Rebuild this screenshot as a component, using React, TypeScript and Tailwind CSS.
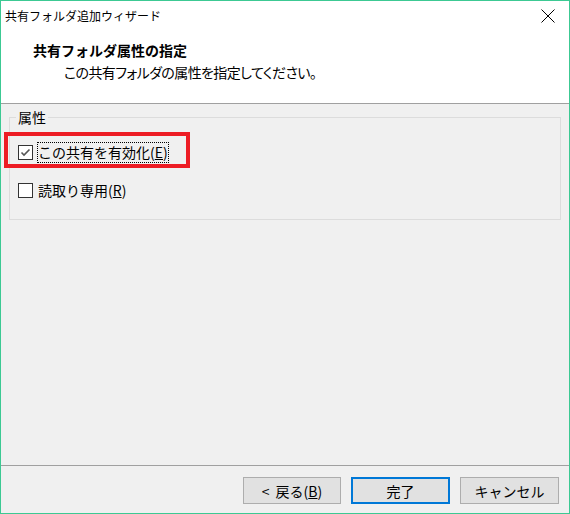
import React from "react";

function CheckBox({ checked }: { checked: boolean }) {
  return (
    <div className="w-[15px] h-[15px] border border-[#333333] bg-white flex items-center justify-center shrink-0">
      {checked && (
        <svg width="13" height="13" viewBox="0 0 13 13">
          <polyline points="2.5,6.5 5,9 10.5,3.5" fill="none" stroke="#555555" strokeWidth="1.6" />
        </svg>
      )}
    </div>
  );
}

export default function App() {
  return (
    <div className="w-[570px] h-[514px] border border-[#3cc993] bg-[#f0f0f0] flex flex-col font-['Noto_Sans_CJK_JP',sans-serif] text-black select-none">
      {/* title + header */}
      <div className="h-[103px] bg-white border-b border-[#a0a0a0] flex flex-col shrink-0">
        <div className="h-[30px] flex items-center justify-between pl-[4px] pr-[14px]">
          <span className="text-[12px] leading-[16px] -mt-[1px]">共有フォルダ追加ウィザード</span>
          <svg width="14" height="14" viewBox="0 0 14 14" className="-mt-[1px]">
            <line x1="0.5" y1="0.5" x2="13.5" y2="13.5" stroke="#000" strokeWidth="1" />
            <line x1="13.5" y1="0.5" x2="0.5" y2="13.5" stroke="#000" strokeWidth="1" />
          </svg>
        </div>
        <div className="pl-[32px] pt-[9px] text-[14px] leading-[20px] font-bold">共有フォルダ属性の指定</div>
        <div className="pl-[63px] pt-[2px] text-[14px] leading-[20px] tracking-[-0.6px] [font-feature-settings:'palt']">この共有フォルダの属性を指定してください。</div>
      </div>

      {/* body */}
      <div className="flex-1 relative">
        <fieldset className="mt-[4px] ml-[8px] mr-[8px] h-[112px] border border-[#dcdcdc] pl-[8px]">
          <legend className="-ml-[2px] px-[2px] text-[14px] leading-[18px]">属性</legend>
          <div className="flex items-center h-[21px] mt-[16px] gap-[4px]">
            <CheckBox checked={true} />
            <span className="text-[14px] leading-[19px] border border-dotted border-black px-[0px]">
              この共有を有効化(<span className="underline">E</span>)
            </span>
          </div>
          <div className="flex items-center h-[21px] mt-[17px] gap-[5px]">
            <CheckBox checked={false} />
            <span className="text-[14px] leading-[19px]">
              読取り専用(<span className="underline">R</span>)
            </span>
          </div>
        </fieldset>
        <div className="absolute left-[3px] top-[28px] w-[186px] h-[36px] border-[4px] border-[#ed1c24]" />
      </div>

      {/* footer */}
      <div className="h-[48px] border-t border-[#a0a0a0] flex items-start justify-end pt-[11px] pr-[10px] gap-[10px] shrink-0">
        <button className="w-[98px] h-[27px] bg-[#e1e1e1] border border-[#adadad] text-[14px] leading-[18px] flex items-center justify-center gap-[6px]">
          <span>&lt;</span>
          <span>戻る(<span className="underline">B</span>)</span>
        </button>
        <button className="w-[99px] h-[27px] bg-[#e1e1e1] border-2 border-[#0078d7] text-[14px] leading-[18px] flex items-center justify-center">
          完了
        </button>
        <button className="w-[99px] h-[27px] bg-[#e1e1e1] border border-[#adadad] text-[14px] leading-[18px] flex items-center justify-center">
          キャンセル
        </button>
      </div>
    </div>
  );
}
